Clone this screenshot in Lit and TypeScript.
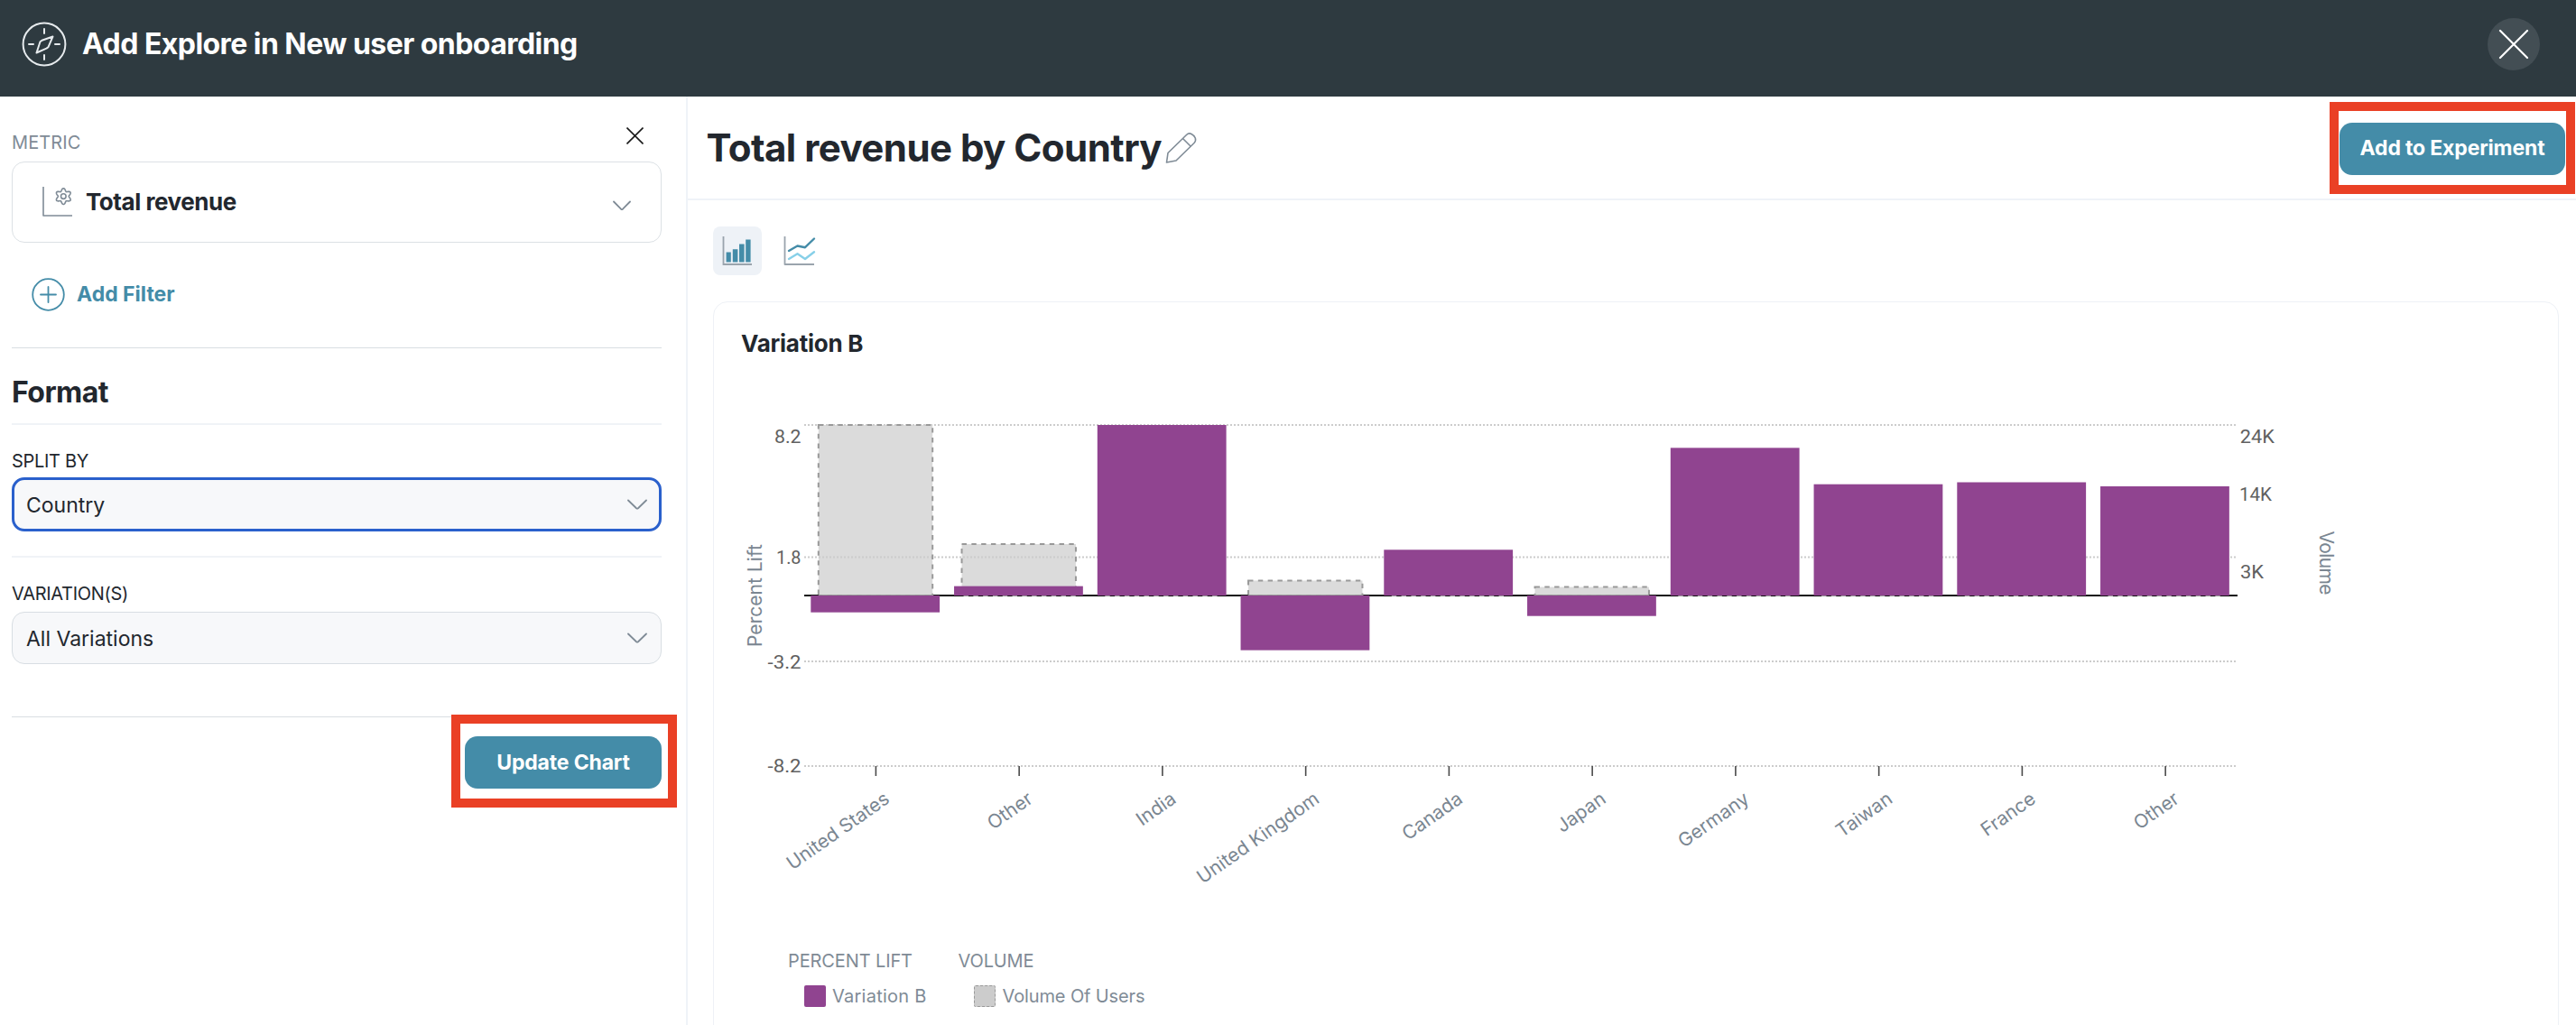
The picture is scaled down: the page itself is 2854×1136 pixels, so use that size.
import { LitElement, html, svg, css } from "lit";
import { customElement } from "lit/decorators.js";

interface Row { name: string; lift: number; volume: number; }

const ROWS: Row[] = [
  { name: "United States", lift: -0.81, volume: 24 },
  { name: "Other", lift: 0.45, volume: 7.24 },
  { name: "India", lift: 8.2, volume: 0 },
  { name: "United Kingdom", lift: -2.63, volume: 2.1 },
  { name: "Canada", lift: 2.2, volume: 0 },
  { name: "Japan", lift: -0.985, volume: 1.2 },
  { name: "Germany", lift: 7.1, volume: 0 },
  { name: "Taiwan", lift: 5.35, volume: 0 },
  { name: "France", lift: 5.445, volume: 0 },
  { name: "Other", lift: 5.25, volume: 0 },
];

const LEFT = 100;
const RIGHT = 1687;
const ZERO = 260;
const UNIT = 189 / 8.2;
const VOLUME_UNIT = 189 / 24;
const STEP = 158.75;

// Six-lobed outline of the gear in the metric icon, first lobe pointing up.
const GEAR = (() => {
  const points: string[] = [];
  for (let i = 0; i < 72; i++) {
    const a = (i / 72) * Math.PI * 2;
    const r = 7.4 + 1.5 * Math.cos(6 * a);
    points.push(`${(23.3 + r * Math.sin(a)).toFixed(2)} ${(10.6 - r * Math.cos(a)).toFixed(2)}`);
  }
  return `M${points.join("L")}Z`;
})();

@customElement("lift-chart")
export class LiftChart extends LitElement {
  static styles = css`
    :host { display: block; }
    svg { display: block; }
    .grid { stroke: #cccccc; stroke-width: 2; stroke-dasharray: 2 2; }
    .zero { stroke: #111111; stroke-width: 2.2; }
    .tick { stroke: #4a4a4a; stroke-width: 1.6; }
    .volume { fill: #cccccc; fill-opacity: 0.7; stroke: #999999; stroke-width: 2; stroke-dasharray: 5.4 5.4; }
    .lift { fill: #904490; }
    .num { font: 400 20.5px Roboto, sans-serif; fill: #606060; }
    .axis { font: 400 21px Inter, sans-serif; fill: #7a8691; }
  `;

  private num(text: string, x: number, y: number, width: number) {
    return svg`<text class="num" x=${x} y=${y} textLength=${width} lengthAdjust="spacingAndGlyphs">${text}</text>`;
  }

  render() {
    return html`<svg width="2043" height="640" viewBox="0 0 2043 640">
      ${[71, 217.5, 333, 449].map((y) => svg`<line class="grid" x1=${LEFT} x2=${RIGHT} y1=${y} y2=${y}></line>`)}
      <line class="zero" x1=${LEFT} x2=${RIGHT + 1} y1=${ZERO} y2=${ZERO}></line>
      ${ROWS.map((r, i) => {
        const h = r.volume * VOLUME_UNIT;
        return svg`<rect class="volume" x=${115.8 + i * STEP} y=${ZERO - h} width="126.4" height=${h}></rect>
          ${h === 0 ? svg`<line class="volume" x1=${115.8 + i * STEP} x2=${242.2 + i * STEP} y1=${ZERO} y2=${ZERO}></line>` : ""}`;
      })}
      ${ROWS.map((r, i) => svg`<rect class="lift" x=${107.3 + i * STEP} y=${ZERO - Math.max(0, r.lift) * UNIT} width="142.8" height=${Math.abs(r.lift) * UNIT}></rect>`)}
      ${ROWS.map((r, i) => {
        const x = LEFT + 79.4 + i * STEP;
        return svg`<line class="tick" x1=${x} x2=${x} y1="449" y2="460"></line>
          <text class="axis" text-anchor="end" transform="translate(${x + 16.5} 488.5) rotate(-35)">${r.name}</text>`;
      })}
      ${this.num("8.2", 67, 91, 29.5)}
      ${this.num("1.8", 69, 224.7, 27.5)}
      ${this.num("-3.2", 59.5, 340.7, 37)}
      ${this.num("-8.2", 59.5, 455.7, 37)}
      ${this.num("24K", 1690.8, 91, 38)}
      ${this.num("14K", 1690, 155, 36)}
      ${this.num("3K", 1691, 241, 26)}
      <text class="axis" transform="translate(53 317) rotate(-90)" textLength="114">Percent Lift</text>
      <text class="axis" transform="translate(1779 188.5) rotate(90)" textLength="71">Volume</text>
    </svg>`;
  }
}

@customElement("app-root")
export class AppRoot extends LitElement {
  static styles = css`
    :host { display: flex; flex-direction: column; width: 2854px; height: 1136px; overflow: hidden; background: #fff; color: #22272e; font-family: Inter, "Liberation Sans", sans-serif; }
    * { box-sizing: border-box; }
    svg { display: block; flex: none; }
    .top { flex: none; height: 107px; padding: 0 40px 9px 24px; display: flex; align-items: center; background: #2e3a40; color: #fff; }
    .top h1 { flex: 1; margin: 0 0 1px 17px; font-size: 32px; font-weight: 700; line-height: 40px; letter-spacing: -0.55px; }
    .close { width: 58px; height: 58px; border-radius: 50%; background: #434e54; display: grid; place-items: center; }
    .body { flex: 1; min-height: 0; display: flex; }
    aside { flex: none; width: 762px; padding: 0 27px 0 13px; border-right: 2px solid #eff3f8; }
    .head { height: 72px; display: flex; justify-content: space-between; padding: 34px 20px 0 0; }
    .label { font-size: 20px; line-height: 20px; white-space: nowrap; letter-spacing: -0.3px; }
    .head .label { margin-top: 7px; color: #7f8b96; letter-spacing: 0.1px; }
    .metric { height: 90px; border: 1px solid #dce1e5; border-radius: 14px; display: flex; align-items: center; padding: 0 33px 0 33px; }
    .metric span { flex: 1; margin: 0 0 2px 14px; font-size: 26px; font-weight: 700; letter-spacing: -0.45px; }
    .metric .chev { margin-top: 8px; }
    .filter { display: flex; align-items: center; height: 38px; margin-top: 38px; padding-left: 21px; gap: 12px; color: #448ca8; font-size: 23px; font-weight: 700; letter-spacing: 0; }
    .rule { height: 1px; background: #d9dee2; }
    .rule.soft { height: 2px; background: #f0f3f7; }
    .r1 { margin-top: 40px; }
    h2 { margin: 32px 0 0; font-size: 32px; line-height: 34px; font-weight: 700; letter-spacing: -0.55px; }
    .r2 { margin-top: 17px; }
    .l2 { margin-top: 30px; }
    .select { height: 58px; display: flex; align-items: center; justify-content: space-between; border: 1px solid #d8dee3; border-radius: 14px; background: #f7f8fa; padding: 0 15px; font-size: 23px; margin-top: 10px; }
    .select span { padding-top: 2px; }
    .select.on { height: 60px; margin-top: 8px; border: 3px solid #2a60cc; padding: 0 13px; }
    .r3 { margin-top: 27px; }
    .r4 { margin-top: 58px; }
    .actions { display: flex; justify-content: flex-end; margin-top: 21px; }
    .btn { position: relative; height: 58px; border-radius: 14px; background: #448ca8; color: #fff; display: grid; place-items: center; font-size: 23px; font-weight: 700; white-space: nowrap; letter-spacing: -0.16px; }
    .btn::after { content: ""; position: absolute; border: 10px solid #ea4025; }
    .update { width: 218px; }
    .update::after { inset: -24px -17px -21px -15px; }
    .add { width: 250px; padding-bottom: 2px; }
    .add::after { inset: -23px -11px -21px -11px; }
    main { flex: 1; min-width: 0; }
    .title { height: 115px; border-bottom: 2px solid #eff3f8; display: flex; align-items: center; padding: 0 12px 0 20.5px; }
    .title h3 { margin: 0; font-size: 42px; line-height: 50px; font-weight: 700; letter-spacing: -0.53px; }
    .title .pen { margin-left: 4px; }
    .title .add { margin-left: auto; margin-top: 3px; }
    .kinds { display: flex; gap: 15px; padding: 29px 0 29px 28px; }
    .kind { width: 54px; height: 54px; border-radius: 8px; display: grid; place-items: center; }
    .kind.on { background: #eef2f7; }
    .card { margin: 0 19px 0 28px; height: 900px; border: 1px solid #eef1f6; border-radius: 16px; }
    .card h4 { margin: 0; padding: 30px 0 0 30px; height: 65px; font-size: 26px; line-height: 32px; font-weight: 700; letter-spacing: -0.24px; }
    .legend { display: flex; padding-left: 82px; gap: 35px; margin-top: 13px; color: #7f8b96; font-size: 20px; line-height: 24px; letter-spacing: -0.12px; }
    .item { display: flex; align-items: center; gap: 7px; margin: 15px 0 0 18px; }
    .first { letter-spacing: 0.24px; }
    .sw { width: 24px; height: 24px; border-radius: 2px; background: #904490; }
    .sw.v { background: #ccc; border: 1px dashed #999; }
  `;

  private chevron(w: number, h: number) {
    return html`<svg class="chev" width=${w + 2} height=${h + 2} viewBox="-1 -1 ${w + 2} ${h + 2}" fill="none" stroke="#7f8b96" stroke-width="1.8" stroke-linecap="round"><path d="M0 0.5 L${w / 2 - 1} ${h - 0.8} Q${w / 2} ${h} ${w / 2 + 1} ${h - 0.8} L${w} 0.5"></path></svg>`;
  }

  render() {
    return html`
      <header class="top">
        <svg width="50" height="50" viewBox="-25 -25 50 50" fill="none" stroke="#e6eaed" stroke-width="2" stroke-linecap="round" stroke-linejoin="round"><circle r="23.4"></circle><path d="M0 -17V-12M0 12V17M-17 0H-12M12 0H17M9.5 -8.5 L4.5 3.2 L2.5 4.6 L-8.5 9.5 L-4.5 -2.7 L-2.5 -4.3 Z"></path></svg>
        <h1>Add Explore in New user onboarding</h1>
        <div class="close"><svg width="34" height="34" viewBox="-17 -17 34 34" stroke="#fff" stroke-width="2.2" stroke-linecap="round"><path d="M-15 -15L15 15M15 -15L-15 15"></path></svg></div>
      </header>
      <div class="body">
        <aside>
          <div class="head"><div class="label">METRIC</div>
            <svg width="19" height="19" viewBox="0 0 19 19" stroke="#1a1a1a" stroke-width="1.6"><path d="M0.5 0.5L18.5 18.5M18.5 0.5L0.5 18.5"></path></svg></div>
          <div class="metric">
            <svg width="34" height="34" viewBox="0 0 34 34" fill="none" stroke="#7f8b96" stroke-width="1.6" stroke-linejoin="round"><path d="M1 0V32H33"></path><circle cx="23.3" cy="10.6" r="2.8"></circle><path d=${GEAR}></path></svg>
            <span>Total revenue</span>${this.chevron(18, 9.5)}
          </div>
          <div class="filter"><svg width="39" height="39" viewBox="-19.5 -19.5 39 39" fill="none" stroke="#448ca8" stroke-width="1.8" stroke-linecap="round"><circle r="17.3"></circle><path d="M-8.5 0H8.5M0 -8.5V8.5"></path></svg><span>Add Filter</span></div>
          <div class="rule r1"></div>
          <h2>Format</h2>
          <div class="rule soft r2"></div>
          <div class="label l2">SPLIT BY</div>
          <div class="select on"><span>Country</span>${this.chevron(20, 10)}</div>
          <div class="rule soft r3"></div>
          <div class="label l2">VARIATION(S)</div>
          <div class="select"><span>All Variations</span>${this.chevron(20, 10)}</div>
          <div class="rule r4"></div>
          <div class="actions"><div class="btn update">Update Chart</div></div>
        </aside>
        <main>
          <div class="title"><h3>Total revenue by Country</h3>
            <svg class="pen" width="36" height="36" viewBox="0 0 36 36" fill="none" stroke="#7f8b96" stroke-width="1.6" stroke-linejoin="round"><path d="M1.5 34 L3 23.5 L23.5 3.5 Q26 1 29 2.5 Q32 4 33.3 7 Q34.3 10 32 12.5 L12 32 Z M19.5 7.5 L28.5 16.5"></path></svg>
            <div class="btn add">Add to Experiment</div></div>
          <div class="kinds">
            <div class="kind on"><svg width="34" height="34" viewBox="0 0 34 34"><path d="M1.5 1V32H33" fill="none" stroke="#9aa4ad" stroke-width="1.8"></path><path d="M4.6 18.5h5.2v11h-5.2zM11.8 15.2h5.6v14.3h-5.6zM19 9.6h5.6v19.9h-5.6zM26.2 4.6h5.4v24.9h-5.4z" fill="#448ca8"></path></svg></div>
            <div class="kind"><svg width="36" height="34" viewBox="0 0 36 34" fill="none" stroke-linejoin="round" stroke-linecap="round"><path d="M1.5 1V32H34" stroke="#9aa4ad" stroke-width="1.8" stroke-linecap="butt"></path><path d="M6 17L15.5 11.5L24 13.2L34 3.5" stroke="#448ca8" stroke-width="2.4"></path><path d="M6 26L15.5 20.3L24 26L34 18.3" stroke="#87d0e8" stroke-width="2.4"></path></svg></div>
          </div>
          <div class="card">
            <h4>Variation B</h4>
            <lift-chart></lift-chart>
            <div class="legend">
              <div><div>PERCENT LIFT</div><div class="item first"><i class="sw"></i>Variation B</div></div>
              <div><div>VOLUME</div><div class="item"><i class="sw v"></i>Volume Of Users</div></div>
            </div>
          </div>
        </main>
      </div>`;
  }
}
